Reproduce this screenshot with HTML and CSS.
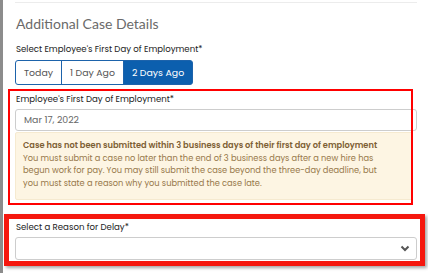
FILE: index.html
```html
<!DOCTYPE html>
<html lang="en">
<head>
<meta charset="UTF-8">
<meta name="viewport" content="width=device-width, initial-scale=1.0">
<title>Additional Case Details</title>
<link rel="stylesheet" href="styles.css">
</head>
<body>
<div class="page">
    <div class="rail"></div>
    <div class="panel">
        <h2 class="panel-title">Additional Case Details</h2>

        <label class="field-label">Select Employee's First Day of Employment*</label>
        <div class="btn-group">
            <button class="btn">Today</button>
            <button class="btn">1 Day Ago</button>
            <button class="btn active">2 Days Ago</button>
        </div>

        <div class="highlight thin">
            <label class="field-label">Employee's First Day of Employment*</label>
            <div class="text-input">Mar 17, 2022</div>
            <div class="warning">
                <strong>Case has not been submitted within 3 business days of their first day of employment</strong>
                You must submit a case no later than the end of 3 business days after a new hire has begun work for pay. You may still submit the case beyond the three-day deadline, but you must state a reason why you submitted the case late.
            </div>
        </div>

        <div class="highlight thick">
            <label class="field-label">Select a Reason for Delay*</label>
            <div class="select">
                <svg class="chevron" width="10" height="7" viewBox="0 0 10 7">
                    <path d="M1.5 1.5 L5 5 L8.5 1.5" fill="none" stroke="#555" stroke-width="2"/>
                </svg>
            </div>
        </div>
    </div>
</div>
</body>
</html>
```

FILE: styles.css
```css
body {
    margin: 0;
    padding: 0;
    background-color: #fff;
    font-family: "Poppins", "Open Sans", sans-serif;
    color: #333;
}
.page {
    display: flex;
    height: 273px;
    padding-top: 2px;
    box-sizing: border-box;
}
.rail {
    width: 3px;
    background-color: #8c8c8c;
    margin-top: -2px;
}
.panel {
    margin-left: 12px;
    width: 402px;
    border-top: 1px solid #ececec;
    display: flex;
    flex-direction: column;
}
.panel-title {
    margin: 11px 0 0 1px;
    font-family: "Lato", sans-serif;
    font-size: 14px;
    line-height: 20px;
    font-weight: 400;
    color: #6a6a6a;
}
.field-label {
    display: block;
    margin: 9px 0 0 1px;
    font-size: 8.6px;
    line-height: 12px;
    color: #222;
}
.btn-group {
    display: flex;
    margin-top: 5px;
}
.btn {
    height: 25px;
    padding: 0 8px;
    font-family: inherit;
    font-size: 9.4px;
    color: #555;
    background-color: #fff;
    border: 1px solid #1d63ab;
    border-radius: 0;
    margin-left: -1px;
}
.btn:first-child {
    margin-left: 0;
    border-radius: 3px 0 0 3px;
}
.btn:last-child {
    border-radius: 0 3px 3px 0;
}
.btn.active {
    background-color: #0c5fae;
    color: #fff;
}
.highlight {
    position: relative;
    display: flex;
    flex-direction: column;
}
.highlight.thin .field-label {
    margin-top: 8px;
}
.highlight.thin::after {
    content: "";
    position: absolute;
    left: -7px;
    right: 4px;
    top: 4px;
    bottom: -5px;
    border: 2px solid #f00;
}
.highlight.thick {
    margin-top: 14px;
}
.highlight.thick .field-label {
    margin-top: 7px;
}
.highlight.thick::after {
    content: "";
    position: absolute;
    left: -11px;
    right: -8px;
    top: 0;
    bottom: -6px;
    border: 5px solid #f5170e;
    box-shadow: 2px 2px 3px rgba(0, 0, 0, 0.35);
}
.text-input {
    margin-top: 4px;
    height: 22px;
    box-sizing: border-box;
    border: 1px solid #cdcdcd;
    border-radius: 3px;
    padding: 0 8px;
    font-size: 9.4px;
    line-height: 20px;
    color: #666;
}
.warning {
    margin-top: 1px;
    width: 398px;
    box-sizing: border-box;
    padding: 6px 26px 9px 7px;
    background-color: #fdf5e3;
    border: 1px solid #f6ead0;
    border-radius: 2px;
    font-size: 8.25px;
    line-height: 12.7px;
    color: #97784a;
}
.warning strong {
    display: block;
    color: #7d6034;
    font-weight: 600;
}
.select {
    margin-top: 4px;
    height: 23px;
    box-sizing: border-box;
    border: 1px solid #cdcdcd;
    border-radius: 3px;
    display: flex;
    align-items: center;
    justify-content: flex-end;
    padding-right: 6px;
}
```
